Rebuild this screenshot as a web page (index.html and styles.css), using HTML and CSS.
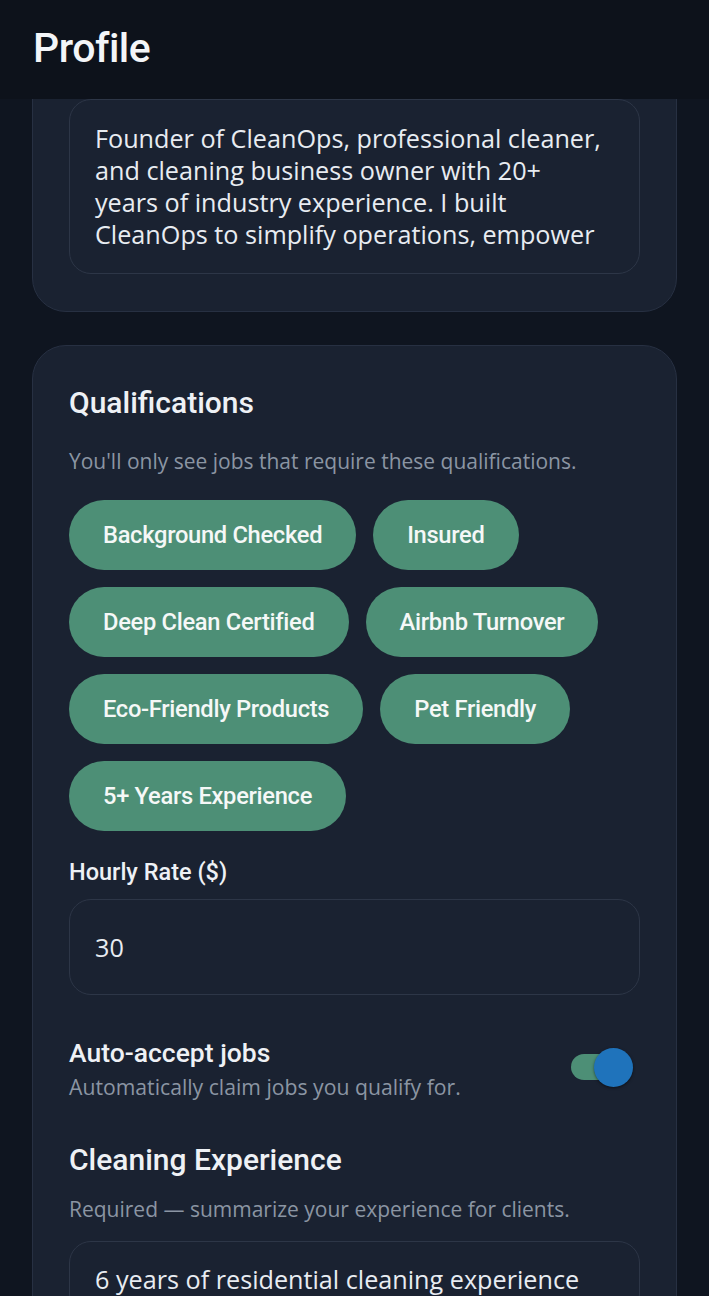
FILE: index.html
```html
<!DOCTYPE html>
<html>
<head>
<meta charset="utf-8">
<link rel="stylesheet" href="styles.css">
</head>
<body>
<header class="topbar"><h1 class="title">Profile</h1></header>
<main class="scroll">
  <div class="content">
    <section class="card card-bio">
      <div class="field textarea bio">Founder of CleanOps, professional cleaner, and cleaning business owner with 20+ years of industry experience. I built CleanOps to simplify operations, empower</div>
    </section>
    <section class="card">
      <h2 class="section-title">Qualifications</h2>
      <p class="hint hint-q">You'll only see jobs that require these qualifications.</p>
      <div class="chips">
        <span class="chip">Background Checked</span>
        <span class="chip">Insured</span>
        <span class="chip">Deep Clean Certified</span>
        <span class="chip">Airbnb Turnover</span>
        <span class="chip">Eco-Friendly Products</span>
        <span class="chip">Pet Friendly</span>
        <span class="chip">5+ Years Experience</span>
      </div>
      <label class="label">Hourly Rate ($)</label>
      <div class="field input">30</div>
      <div class="toggle-row">
        <div class="toggle-text">
          <div class="toggle-title">Auto-accept jobs</div>
          <div class="toggle-sub">Automatically claim jobs you qualify for.</div>
        </div>
        <div class="switch"><span class="track"></span><span class="thumb"></span></div>
      </div>
      <h2 class="section-title exp">Cleaning Experience</h2>
      <p class="hint hint-exp">Required — summarize your experience for clients.</p>
      <div class="field textarea exp-field">6 years of residential cleaning experience</div>
    </section>
  </div>
</main>
</body>
</html>
```
FILE: styles.css
```css
* { box-sizing: border-box; }
html, body { margin: 0; padding: 0; }
body {
  width: 709px;
  height: 1296px;
  overflow: hidden;
  background: #0f1520;
  font-family: "Open Sans", "Noto Sans", sans-serif;
  color: #eef1f5;
  display: flex;
  flex-direction: column;
}
.topbar {
  height: 99px;
  flex: none;
  background: #0d121b;
  padding: 24px 33px 0;
}
.title {
  margin: 0;
  font-family: Roboto, sans-serif;
  font-size: 41px;
  font-weight: 500;
  letter-spacing: -0.5px;
  color: #f3f5f8;
  line-height: 48px;
}
.scroll {
  flex: 1;
  overflow: hidden;
}
.content {
  margin-top: -37px;
  padding: 0 32px;
  display: flex;
  flex-direction: column;
  gap: 33px;
}
.card {
  background: #1a2231;
  border: 1px solid #273042;
  border-radius: 34px;
  padding: 39px 36px 37px;
  display: flex;
  flex-direction: column;
}
.card-bio { padding-top: 36px; }
.field {
  border: 1.5px solid #2d3647;
  border-radius: 22px;
  background: #1a2231;
  color: #e8ecf1;
  font-size: 25.2px;
  line-height: 32px;
  padding: 21px 30px 20px 25px;
}
.bio { height: 175px; padding-top: 22px; }
.section-title {
  margin: 0;
  font-family: Roboto, sans-serif;
  font-size: 30px;
  font-weight: 500;
  line-height: 36px;
  color: #eef1f5;
}
.hint {
  margin: 26px 0 0;
  font-size: 21px;
  line-height: 28px;
  color: #8b95a3;
}
.chips {
  display: flex;
  flex-wrap: wrap;
  gap: 17px 17px;
  margin-top: 25px;
}
.chip {
  height: 70px;
  border-radius: 35px;
  background: #4d8f76;
  color: #f5f8f7;
  font-family: Roboto, sans-serif;
  font-size: 23.7px;
  font-weight: 500;
  padding: 0 34px;
  display: flex;
  align-items: center;
  letter-spacing: -0.3px;
}
.label {
  margin-top: 26px;
  font-family: Roboto, sans-serif;
  font-size: 23.5px;
  font-weight: 500;
  line-height: 30px;
  color: #eef1f5;
}
.input {
  margin-top: 12px;
  height: 96px;
  display: flex;
  align-items: center;
  padding-top: 0;
  padding-bottom: 0;
}
.toggle-row {
  margin-top: 42px;
  display: flex;
  align-items: center;
  justify-content: space-between;
}
.toggle-title {
  font-family: Roboto, sans-serif;
  font-size: 26.5px;
  font-weight: 500;
  line-height: 32px;
}
.toggle-sub {
  margin-top: 4px;
  font-size: 21.2px;
  line-height: 28px;
  color: #8b95a3;
}
.switch {
  position: relative;
  width: 62px;
  height: 39px;
  margin-right: 7px;
  margin-top: -3px;
}
.track {
  position: absolute;
  left: 0; top: 6px;
  width: 46px; height: 26px;
  border-radius: 13px;
  background: #4d8f76;
}
.thumb {
  position: absolute;
  right: 0; top: 0;
  width: 39px; height: 39px;
  border-radius: 50%;
  background: #1f73bb;
  box-shadow: 0 1px 3px rgba(0,0,0,0.5);
}
.exp { margin-top: 41px; }
.hint-exp { margin-top: 17px; }
.exp-field { margin-top: 18px; }
```
